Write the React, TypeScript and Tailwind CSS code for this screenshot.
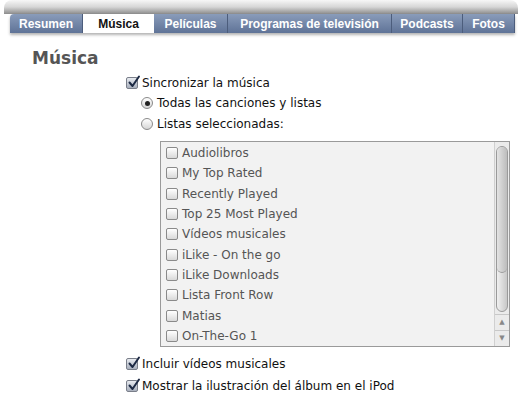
import React from 'react';

const tabs = [
	{ name: 'Resumen', w: 'w-[73px]' },
	{ name: 'Música', w: 'w-[71px]', active: true },
	{ name: 'Películas', w: 'w-[74px]' },
	{ name: 'Programas de televisión', w: 'w-[164px]' },
	{ name: 'Podcasts', w: 'w-[71px]' },
	{ name: 'Fotos', w: 'w-[52px]' }
];

const playlists = [
	'Audiolibros',
	'My Top Rated',
	'Recently Played',
	'Top 25 Most Played',
	'Vídeos musicales',
	'iLike - On the go',
	'iLike Downloads',
	'Lista Front Row',
	'Matias',
	'On-The-Go 1'
];

const Check = ({ checked }: { checked?: boolean }) => (
	<span
		className={
			checked
				? 'relative inline-block w-[12px] h-[12px] shrink-0 rounded-[2px] border border-[#7a7f8a] bg-gradient-to-b from-[#e8ebf0] to-[#a9b0bd]'
				: 'relative inline-block w-[12px] h-[12px] shrink-0 rounded-[2px] border border-[#8a8a8a] bg-gradient-to-b from-[#ffffff] to-[#d9d9d9]'
		}
	>
		{checked && (
			<svg className="absolute left-[0px] top-[-3px]" width="14" height="14" viewBox="0 0 14 14">
				<path d="M2.5 7.5 L5.5 11 L12 1.5" fill="none" stroke="#1d2a44" strokeWidth="2" strokeLinecap="round" strokeLinejoin="round" />
			</svg>
		)}
	</span>
);

const Radio = ({ checked }: { checked?: boolean }) => (
	<span className="inline-flex items-center justify-center w-[12px] h-[12px] shrink-0 rounded-full border border-[#8a8a8a] bg-gradient-to-b from-[#ffffff] to-[#d6d6d6]">
		{checked && <span className="w-[5px] h-[5px] rounded-full bg-[#222]" />}
	</span>
);

const App = () => {
	return (
		<div className="w-[520px] h-[413px] bg-white overflow-hidden text-[#111] font-['DejaVu_Sans',sans-serif] text-[12px]">
			{/* tab strip with its shadow */}
			<div className="h-[14px] bg-gradient-to-b from-[#f7f7f7] via-[#d6d6d6] to-[#8c8c8c] ml-[4px] mr-[2px] rounded-t-[8px]" />
			<div className="flex h-[19px] ml-[10px] shadow-[0_2px_3px_rgba(0,0,0,0.3)] w-[505px] rounded-tl-[4px] overflow-hidden font-['Liberation_Sans',sans-serif]">
				{tabs.map((t, i) => (
					<div
						key={i}
						className={
							t.active
								? `${t.w} flex items-center justify-center bg-white text-[#111] font-bold text-[12px] rounded-t-[3px]`
								: `${t.w} flex items-center justify-center bg-gradient-to-b from-[#8a9cba] to-[#5f7397] text-white font-bold text-[12px] border-r border-[#4c5d7c]`
						}
					>
						{t.name}
					</div>
				))}
			</div>

			<h1 className="ml-[32px] mt-[14px] text-[17px] font-bold text-[#555] leading-[22px]">Música</h1>

			<div className="ml-[126px] mt-[4px] flex flex-col">
				<label className="flex items-center gap-[4px] h-[20px]">
					<Check checked />
					<span>Sincronizar la música</span>
				</label>
				<div className="ml-[15px] flex flex-col">
					<label className="flex items-center gap-[4px] h-[20px]">
						<Radio checked />
						<span>Todas las canciones y listas</span>
					</label>
					<label className="flex items-center gap-[4px] h-[20px] mt-[1px]">
						<Radio />
						<span>Listas seleccionadas:</span>
					</label>
				</div>

				<div className="ml-[34px] mt-[7px] w-[350px] h-[206px] border border-[#9a9a9a] bg-[#f2f2f2] flex">
					<div className="flex-1 pl-[5px] pt-[1px] flex flex-col text-[#555]">
						{playlists.map((p, i) => (
							<div key={i} className="flex items-center gap-[4px] h-[20.5px]">
								<Check />
								<span>{p}</span>
							</div>
						))}
					</div>
					{/* scrollbar */}
					<div className="w-[15px] flex flex-col border-l border-[#d0d0d0] bg-[#ebebeb]">
						<div className="mt-[4px] mx-auto w-[12px] h-[167px] rounded-full border border-[#9a9a9a] bg-gradient-to-r from-[#f0f0f0] via-[#dcdcdc] to-[#c8c8c8] relative">
							<div className="h-[126px] rounded-full border-b border-[#9a9a9a] bg-gradient-to-r from-[#e4e4e4] via-[#cfcfcf] to-[#bcbcbc]" />
						</div>
						<div className="mt-[2px] h-[16px] flex items-center justify-center border-t border-[#c8c8c8] text-[7px] text-[#888]">▲</div>
						<div className="h-[16px] flex items-center justify-center border-t border-[#c8c8c8] text-[7px] text-[#888]">▼</div>
					</div>
				</div>

				<label className="flex items-center gap-[4px] h-[20px] mt-[7px]">
					<Check checked />
					<span>Incluir vídeos musicales</span>
				</label>
				<label className="flex items-center gap-[4px] h-[20px] mt-[2px]">
					<Check checked />
					<span>Mostrar la ilustración del álbum en el iPod</span>
				</label>
			</div>
		</div>
	);
};

export default App;
